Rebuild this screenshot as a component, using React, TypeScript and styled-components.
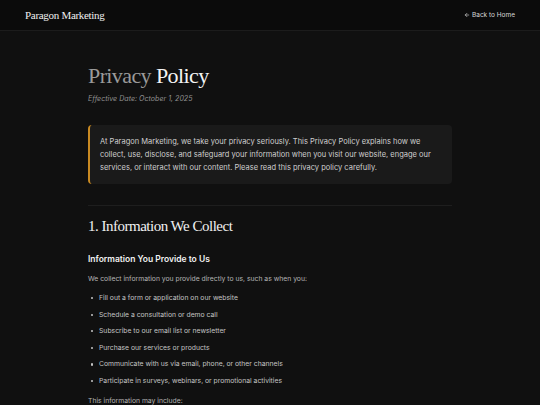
import React from 'react'
import styled, { createGlobalStyle } from 'styled-components'

const GlobalStyle = createGlobalStyle`
  html, body {
    margin: 0;
    padding: 0;
    background: #101010;
  }
  body {
    font-family: Inter, "Noto Sans", sans-serif;
    color: #e8e8e8;
    -webkit-font-smoothing: antialiased;
  }
`

const serif = `"Liberation Serif", "DejaVu Serif", serif`

const Page = styled.div`
  min-height: 405px;
  background: #101010;
`

const Header = styled.header`
  height: 30px;
  display: flex;
  align-items: center;
  justify-content: space-between;
  padding: 0 25px;
  background: #0b0b0b;
  border-bottom: 1px solid #1c1c1c;
`

const Logo = styled.div`
  font-family: ${serif};
  font-size: 11px;
  letter-spacing: -0.3px;
  color: #f0f0f0;
`

const BackLink = styled.a`
  display: flex;
  align-items: center;
  gap: 2px;
  font-size: 6.5px;
  color: #d8d8d8;
  text-decoration: none;
`

const Main = styled.main`
  width: 364px;
  margin: 0 auto;
  padding-top: 31px;
`

const Title = styled.h1`
  margin: 0;
  font-family: ${serif};
  font-weight: 400;
  font-size: 22px;
  letter-spacing: -0.6px;
  line-height: 28px;
  color: #f4f4f4;
  span {
    color: #9a9a9a;
  }
`

const Effective = styled.p`
  margin: 3.5px 0 0;
  font-size: 7.1px;
  line-height: 9px;
  font-style: italic;
  color: #8f8f8f;
`

const Callout = styled.div`
  margin-top: 22.5px;
  padding: 10px 12px 10px 10px;
  background: #1a1a1a;
  border-left: 2px solid #c98a22;
  border-radius: 4px;
  font-size: 7.5px;
  line-height: 13px;
  color: #cfcfcf;
`

const Divider = styled.hr`
  margin: 21px 0 0;
  border: 0;
  border-top: 1px solid #1e1e1e;
`

const SectionTitle = styled.h2`
  margin: 10px 0 0;
  font-family: ${serif};
  font-weight: 400;
  font-size: 15px;
  letter-spacing: -0.5px;
  line-height: 20px;
  color: #f0f0f0;
`

const SubTitle = styled.h3`
  margin: 17px 0 0;
  font-size: 8.5px;
  font-weight: 600;
  line-height: 12px;
  color: #f2f2f2;
`

const Para = styled.p<{ top?: number }>`
  margin: ${({ top }) => top ?? 8}px 0 0;
  font-size: 6.8px;
  line-height: 11px;
  color: #b4b4b4;
`

const List = styled.ul`
  margin: 8.5px 0 0;
  padding: 0 0 0 3px;
  list-style: none;
  display: flex;
  flex-direction: column;
  gap: 4.6px;
`

const Item = styled.li`
  position: relative;
  padding-left: 8px;
  font-size: 6.8px;
  line-height: 12px;
  color: #c4c4c4;
  &::before {
    content: '';
    position: absolute;
    left: 0;
    top: 5px;
    width: 2.2px;
    height: 2.2px;
    border-radius: 50%;
    background: #c4c4c4;
  }
`

const items = [
  'Fill out a form or application on our website',
  'Schedule a consultation or demo call',
  'Subscribe to our email list or newsletter',
  'Purchase our services or products',
  'Communicate with us via email, phone, or other channels',
  'Participate in surveys, webinars, or promotional activities',
]

const App: React.FC = () => {
  return (
    <>
      <GlobalStyle />
      <Page>
        <Header>
          <Logo>Paragon Marketing</Logo>
          <BackLink href="#">
            <svg width="6" height="6" viewBox="0 0 24 24" fill="none" stroke="currentColor" strokeWidth="2.5" strokeLinecap="round" strokeLinejoin="round">
              <path d="M19 12H5" />
              <path d="M12 19l-7-7 7-7" />
            </svg>
            Back to Home
          </BackLink>
        </Header>
        <Main>
          <Title><span>Privacy</span> Policy</Title>
          <Effective>Effective Date: October 1, 2025</Effective>
          <Callout>
            At Paragon Marketing, we take your privacy seriously. This Privacy Policy explains how we
            collect, use, disclose, and safeguard your information when you visit our website, engage our
            services, or interact with our content. Please read this privacy policy carefully.
          </Callout>
          <Divider />
          <SectionTitle>1. Information We Collect</SectionTitle>
          <SubTitle>Information You Provide to Us</SubTitle>
          <Para top={7.5}>We collect information you provide directly to us, such as when you:</Para>
          <List>
            {items.map((t) => (
              <Item key={t}>{t}</Item>
            ))}
          </List>
          <Para top={8.5}>This information may include:</Para>
        </Main>
      </Page>
    </>
  )
}

export default App
